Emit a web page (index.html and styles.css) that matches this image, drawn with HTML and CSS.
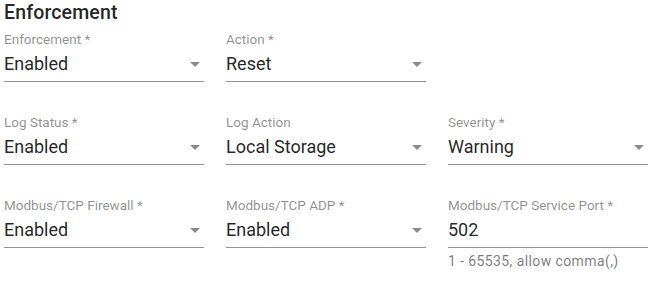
FILE: index.html
```html
<!DOCTYPE html>
<html>
<head>
<meta charset="utf-8">
<link rel="stylesheet" href="styles.css">
</head>
<body>
<div class="page">
  <div class="title">Enforcement</div>
  <div class="row">
    <div class="field">
      <div class="label">Enforcement *</div>
      <div class="control"><span class="value">Enabled</span><span class="arrow"></span></div>
    </div>
    <div class="field">
      <div class="label">Action *</div>
      <div class="control"><span class="value">Reset</span><span class="arrow"></span></div>
    </div>
  </div>
  <div class="row">
    <div class="field">
      <div class="label">Log Status *</div>
      <div class="control"><span class="value">Enabled</span><span class="arrow"></span></div>
    </div>
    <div class="field">
      <div class="label">Log Action</div>
      <div class="control"><span class="value">Local Storage</span><span class="arrow"></span></div>
    </div>
    <div class="field">
      <div class="label">Severity *</div>
      <div class="control"><span class="value">Warning</span><span class="arrow"></span></div>
    </div>
  </div>
  <div class="row">
    <div class="field">
      <div class="label">Modbus/TCP Firewall *</div>
      <div class="control"><span class="value">Enabled</span><span class="arrow"></span></div>
    </div>
    <div class="field">
      <div class="label">Modbus/TCP ADP *</div>
      <div class="control"><span class="value">Enabled</span><span class="arrow"></span></div>
    </div>
    <div class="field">
      <div class="label">Modbus/TCP Service Port *</div>
      <div class="control"><span class="value">502</span></div>
      <div class="hint">1 - 65535, allow comma(,)</div>
    </div>
  </div>
</div>
</body>
</html>
```
FILE: styles.css
```css
html, body {
  margin: 0;
  padding: 0;
  background: #ffffff;
}
.page {
  font-family: Roboto, "Noto Sans", sans-serif;
  padding: 1px 0 0 4px;
  color: rgba(0, 0, 0, 0.87);
}
.title {
  font-size: 19.5px;
  font-weight: 500;
  line-height: 24px;
  height: 24px;
  margin-bottom: 6px;
  letter-spacing: 0.15px;
}
.row {
  display: flex;
  gap: 22px;
  margin-bottom: 32px;
}
.field {
  width: 200px;
  flex: none;
  position: relative;
}
.label {
  font-size: 13.5px;
  line-height: 16px;
  color: rgba(0, 0, 0, 0.46);
  margin-bottom: 5px;
}
.control {
  display: flex;
  align-items: center;
  justify-content: space-between;
  height: 24px;
  padding-bottom: 5px;
  border-bottom: 1px solid rgba(0, 0, 0, 0.42);
}
.value {
  font-size: 18px;
  line-height: 24px;
}
.arrow {
  width: 0;
  height: 0;
  border-left: 5px solid transparent;
  border-right: 5px solid transparent;
  border-top: 5px solid rgba(0, 0, 0, 0.46);
  margin-right: 4px;
}
.hint {
  position: absolute;
  left: 0;
  top: 56px;
  font-size: 14px;
  line-height: 16px;
  letter-spacing: 0.4px;
  color: rgba(0, 0, 0, 0.54);
  white-space: nowrap;
}
```
